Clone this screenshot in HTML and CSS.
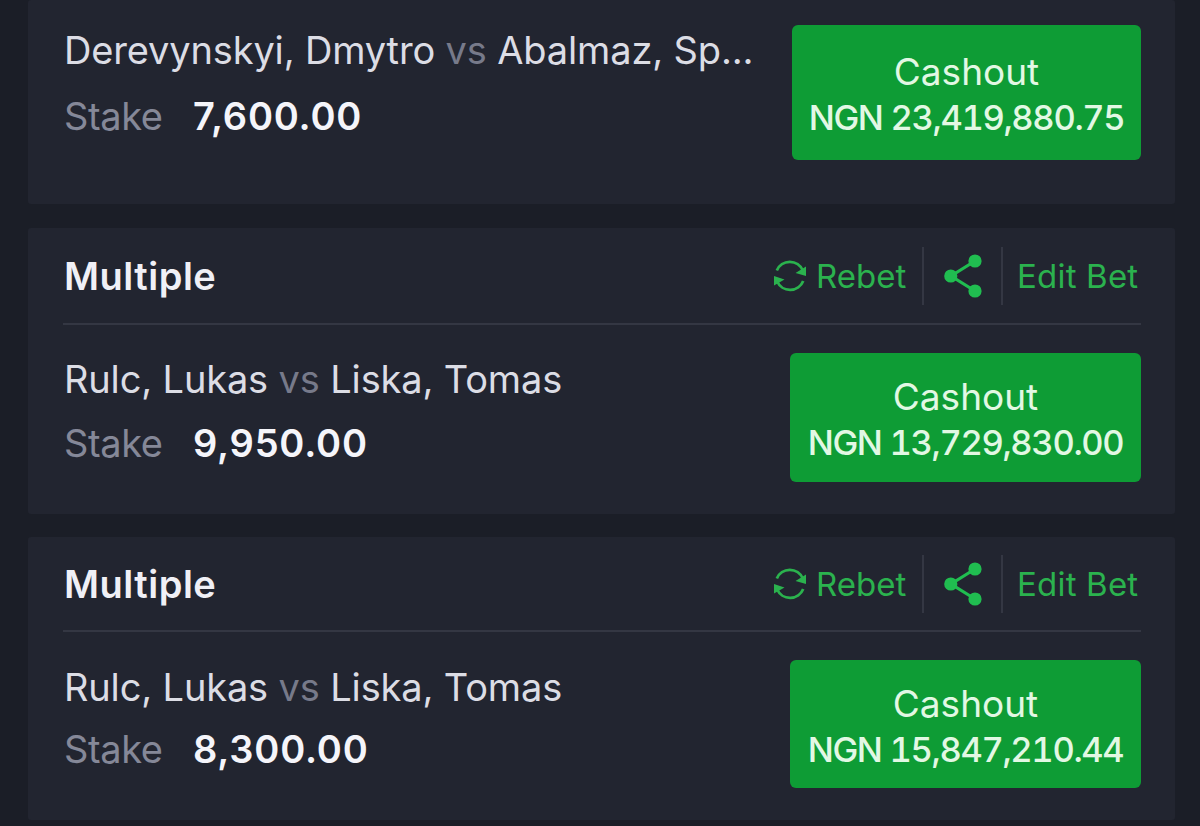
FILE: index.html
```html
<!DOCTYPE html>
<html lang="en">

<head>
    <meta charset="UTF-8">
    <meta name="viewport" content="width=device-width, initial-scale=1.0">
    <title>My Bets</title>
    <link rel="stylesheet" href="styles.css">
</head>

<body>
    <!-- shared icons -->
    <svg class="sprite" width="0" height="0" aria-hidden="true">
        <symbol id="icon-rebet" viewBox="0 0 34 34">
            <path d="M3.8 11.5A14.1 14.1 0 0 1 29.8 11.5M30.2 22A14.1 14.1 0 0 1 4.2 22.5" fill="none" stroke="currentColor" stroke-width="2.8" />
            <path d="M22.5 14L33 7.5V17ZM1 17L11.5 20.5L1 26.5Z" fill="currentColor" />
        </symbol>
        <symbol id="icon-share" viewBox="0 0 38 44">
            <path d="M31 7L7 22L31 37" fill="none" stroke="currentColor" stroke-width="3.2" />
            <circle cx="31" cy="7" r="6.6" fill="currentColor" />
            <circle cx="6.8" cy="22" r="6.6" fill="currentColor" />
            <circle cx="31" cy="37" r="6.6" fill="currentColor" />
        </symbol>
    </svg>

    <main class="bets">
        <section class="card card-first">
            <div class="bet">
                <div class="info">
                    <p class="match">Derevynskyi, Dmytro <span class="vs">vs</span> Abalmaz, Sp...</p>
                    <p class="stake"><span class="label">Stake</span><span class="amount">7,600.00</span></p>
                </div>
                <button class="cashout"><span>Cashout</span><strong>NGN 23,419,880.75</strong></button>
            </div>
        </section>

        <section class="card card-second">
            <header class="card-header">
                <h2>Multiple</h2>
                <div class="actions">
                    <a class="rebet"><svg class="icon-rebet"><use href="#icon-rebet" /></svg><span>Rebet</span></a>
                    <a class="share"><svg class="icon-share"><use href="#icon-share" /></svg></a>
                    <a class="edit">Edit Bet</a>
                </div>
            </header>
            <div class="bet">
                <div class="info">
                    <p class="match">Rulc, Lukas <span class="vs">vs</span> Liska, Tomas</p>
                    <p class="stake"><span class="label">Stake</span><span class="amount">9,950.00</span></p>
                </div>
                <button class="cashout"><span>Cashout</span><strong>NGN 13,729,830.00</strong></button>
            </div>
        </section>

        <section class="card card-third">
            <header class="card-header">
                <h2>Multiple</h2>
                <div class="actions">
                    <a class="rebet"><svg class="icon-rebet"><use href="#icon-rebet" /></svg><span>Rebet</span></a>
                    <a class="share"><svg class="icon-share"><use href="#icon-share" /></svg></a>
                    <a class="edit">Edit Bet</a>
                </div>
            </header>
            <div class="bet">
                <div class="info">
                    <p class="match">Rulc, Lukas <span class="vs">vs</span> Liska, Tomas</p>
                    <p class="stake"><span class="label">Stake</span><span class="amount">8,300.00</span></p>
                </div>
                <button class="cashout"><span>Cashout</span><strong>NGN 15,847,210.44</strong></button>
            </div>
        </section>
    </main>
</body>

</html>
```
FILE: styles.css
```css
* {
    box-sizing: border-box;
}

body {
    margin: 0;
    height: 826px;
    overflow: hidden;
    background: #1b1e27;
    color: #dcdde5;
    font-family: Inter, sans-serif;
}

h2,
p {
    margin: 0;
}

.sprite {
    display: block;
}

.bets {
    padding: 0 25px 0 28px;
}

.card {
    height: 286px;
    padding: 0 34px 0 35px;
    background: #222530;
    border-radius: 3px;
}

.card-first {
    height: 204px;
    margin-bottom: 24px;
    padding-top: 18px;
}

.card-second {
    margin-bottom: 23px;
}

.card-third {
    height: 283px;
}

.card-header {
    display: flex;
    align-items: center;
    justify-content: space-between;
    height: 97px;
    padding-left: 1px;
    border-bottom: 2px solid #343743;
}

.card-third .card-header {
    height: 95px;
}

h2 {
    font-size: 38px;
    font-weight: 600;
    letter-spacing: 0.5px;
    line-height: 48px;
    color: #f0f0f6;
}

.actions {
    display: flex;
    align-items: center;
    height: 58px;
    font-size: 33px;
    line-height: 60px;
    color: #2bb24e;
}

.rebet {
    display: flex;
    align-items: center;
    gap: 9px;
    width: 149px;
}

.icon-rebet {
    width: 34px;
    height: 34px;
}

.share {
    display: flex;
    align-items: center;
    justify-content: center;
    width: 81px;
    height: 58px;
    border-left: 2px solid #343743;
    border-right: 2px solid #343743;
    color: #20bd50;
}

.icon-share {
    width: 38px;
    height: 44px;
}

.edit {
    width: 138px;
    padding-left: 14px;
    letter-spacing: 0.2px;
    white-space: nowrap;
}

.bet {
    display: flex;
    justify-content: space-between;
    align-items: flex-start;
}

.info {
    padding: 22px 0 0 1px;
    line-height: 64px;
    white-space: nowrap;
}

.match {
    font-size: 38px;
    letter-spacing: -0.15px;
}

.vs {
    color: #777a8a;
}

.stake {
    display: flex;
    font-size: 38px;
}

.label {
    width: 129px;
    letter-spacing: -0.4px;
    color: #858898;
}

.amount {
    font-weight: 600;
    letter-spacing: 0.8px;
    color: #f5f5fa;
}

.cashout {
    display: flex;
    flex-direction: column;
    align-items: center;
    width: 351px;
    height: 129px;
    margin-top: 28px;
    padding: 21px 0 0;
    border: 0;
    border-radius: 6px;
    background: #0e9c35;
    color: #e2f8e4;
    font-family: inherit;
    font-size: 37px;
    line-height: 45px;
    white-space: nowrap;
}

.cashout strong {
    font-size: 34.5px;
    font-weight: 550;
    font-variant-numeric: tabular-nums;
    letter-spacing: -1.35px;
    line-height: 47px;
}

.card-first .info {
    padding-top: 0;
    line-height: 65px;
}

.card-first .stake {
    line-height: 67px;
}

.card-first .cashout {
    width: 349px;
    height: 135px;
    margin-top: 7px;
    padding-top: 24px;
}

.card-third .info {
    padding-top: 24px;
    line-height: 62px;
}

.card-third .cashout {
    height: 128px;
}
```
